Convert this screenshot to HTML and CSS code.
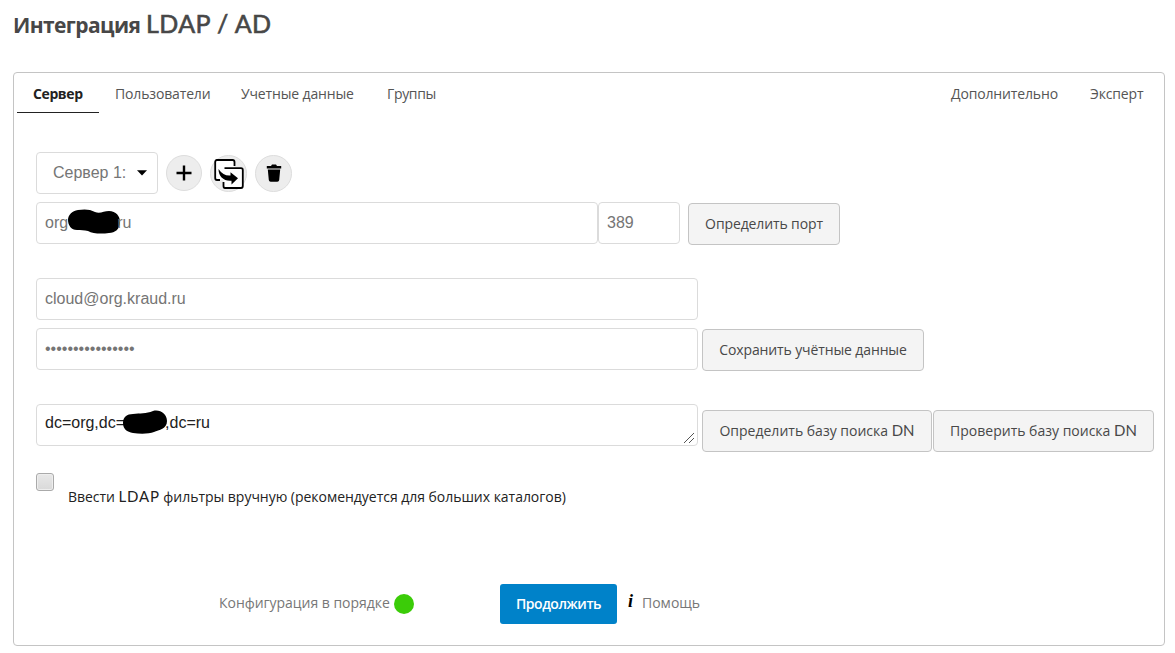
FILE: index.html
```html
<!DOCTYPE html>
<html lang="ru">
<head>
<meta charset="utf-8">
<title>Интеграция LDAP / AD</title>
<link rel="stylesheet" href="styles.css">
</head>
<body>
<h1 class="title">Интеграция <span class="title-latin">LDAP / AD</span></h1>
<main class="panel">
  <nav class="tabs">
    <a class="tab tab-active"><span class="w50">Сервер</span></a>
    <a class="tab"><span class="w95">Пользователи</span></a>
    <a class="tab"><span class="w114">Учетные данные</span></a>
    <a class="tab"><span class="w49">Группы</span></a>
    <a class="tab tab-right"><span class="w107">Дополнительно</span></a>
    <a class="tab"><span class="w54">Эксперт</span></a>
  </nav>
  <section class="form">
    <div class="row server-row">
      <div class="field select"><span>Сервер 1:</span><svg width="10" height="6" viewBox="0 0 10 6"><path d="M0 0.3H10L5 5.6Z"/></svg></div>
      <button class="round"><svg width="16" height="16" viewBox="0 0 16 16"><path d="M8 .5V15.5M.5 8H15.5" stroke="#000" stroke-width="2.4"/></svg></button>
      <button class="round round-copy"><svg width="30" height="30" viewBox="0 0 30 30"><rect x="1.5" y="1.5" width="19" height="19" rx="2" fill="#fff"/><rect x="9.5" y="9.5" width="19" height="19" rx="2" fill="#fff"/><path d="M6 21H3Q1.2 21 1.2 19V3Q1.2 1 3 1H18.5Q20.5 1 20.5 3V7M10.5 9.2H27Q28.8 9.2 28.8 11V27Q28.8 29 27 29H11Q9.5 29 9.5 27V23" fill="none" stroke="#000" stroke-width="1.8"/><path d="M4.5 10C8 15 12 17 16.5 16.5V13.2L24 19.3L17.5 25.5V21.8C9.5 22.5 4.5 17 4.5 10Z"/></svg></button>
      <button class="round round-delete"><svg width="16" height="18" viewBox="0 0 16 18"><path d="M.8 2H5L6 .5H10L11 2H15.2V4.5H.8ZM1.8 5.5H14.2L13.2 16Q13 17.8 11.3 17.8H4.7Q3 17.8 2.8 16Z"/></svg></button>
    </div>
    <div class="row host-row">
      <div class="field host"><span>org</span><svg class="blot" width="54" height="26" viewBox="0 0 54 26"><path d="M11 1C17 0 23 0 28 3C33 5 37 2 42 2C49 2 53 7 53 13C53 20 48 24 42 24C35 25 26 25 21 22C17 21 14 21 10 21C4 21 1 16 1 11C1 6 5 2 11 1Z"/></svg><span class="host-end">ru</span></div>
      <div class="field port">389</div>
      <button class="btn btn-port"><span>Определить порт</span></button>
    </div>
    <div class="row user-row"><div class="field wide">cloud@org.kraud.ru</div></div>
    <div class="row pass-row">
      <div class="field wide">••••••••••••••••</div>
      <button class="btn btn-save"><span>Сохранить учётные данные</span></button>
    </div>
    <div class="row base-row">
      <div class="field wide base"><span>dc=org,dc=</span><svg class="blot blot-base" width="46" height="24" viewBox="0 0 46 24"><path d="M11 4C18 3 24 4 31 1C38-1 45 4 45 11C45 19 37 20 32 22C27 24 18 24 11 23C5 22 1 19 1 13C1 7 5 4 11 4Z"/></svg><span class="base-end">,dc=ru</span><svg class="grip" width="12" height="12" viewBox="0 0 12 12"><path d="M1 11L11 1M6 11L11 6" stroke="#555"/></svg></div>
      <button class="btn btn-detect"><span>Определить базу поиска <b>DN</b></span></button>
      <button class="btn btn-check"><span>Проверить базу поиска <b>DN</b></span></button>
    </div>
    <div class="row filter-row">
      <span class="checkbox"></span>
      <span class="filter-label">Ввести <b class="ldap">LDAP</b> фильтры вручную (рекомендуется для больших каталогов)</span>
    </div>
  </section>
  <footer class="footer">
    <span class="status">Конфигурация в порядке</span><span class="status-dot"></span>
    <button class="continue">Продолжить</button>
    <span class="info">i</span><a class="help">Помощь</a>
  </footer>
</main>
</body>
</html>
```
FILE: styles.css
```css
* { box-sizing: border-box; }
body { margin: 0; height: 653px; padding: 7px 10px 0 13px; overflow: hidden; background: #fff; color: #333; font: 14px/20px "Open Sans", "Noto Sans", sans-serif; white-space: nowrap; }
button { margin: 0; padding: 0; font: inherit; }
b { font-family: Lato, sans-serif; font-weight: 400; font-size: 15px; line-height: 16px; }
svg { display: block; flex: none; }
.title { margin: 0; height: 65px; font-size: 21px; line-height: 33px; font-weight: 700; color: #474747; letter-spacing: -0.6px; }
.title-latin { margin-left: 1px; font-family: Lato, sans-serif; font-size: 25px; font-weight: 400; letter-spacing: 0.4px; -webkit-text-stroke: 0.6px #474747; }
.panel { width: 1152px; height: 574px; border: 1px solid #c4c4c4; border-radius: 4px; }
.tabs { display: flex; height: 40px; padding: 0 4px 0 3px; }
.tab { height: 40px; padding: 11px 16px 0; color: #555; letter-spacing: -0.15px; }
.tab span { display: block; }
.tab-active { color: #222; font-weight: 700; border-bottom: 1px solid #222; }
.tab-right { margin-left: auto; }
.w50 { width: 50px; letter-spacing: -0.4px; }
.w95 { width: 94px; }
.w114 { width: 114px; }
.w49 { width: 49px; letter-spacing: -0.35px; }
.w107 { width: 107px; }
.w54 { width: 54px; }
.form { padding: 39px 0 0 22px; }
.row { display: flex; align-items: flex-start; }
.field { display: flex; height: 42px; border: 1px solid #dbdbdb; border-radius: 4px; padding: 0 8px; background: #fff; color: #757575; font: 16px/40px "Liberation Sans", Arial, sans-serif; }
.server-row { height: 50px; }
.select { width: 122px; padding-left: 16px; padding-right: 10px; align-items: center; justify-content: space-between; margin-right: 8px; }
.round { display: flex; align-items: center; justify-content: center; width: 36px; height: 36px; margin: 3px 8px 0 0; border: 1px solid #ddd; border-radius: 50%; background: #ededed; color: #000; }
.round-copy { width: 37px; height: 37px; }
.round-delete { width: 37px; height: 37px; padding-bottom: 2px; }
.host-row { height: 76px; }
.host { width: 562px; }
.host .blot { margin: 6px 0 0 -1px; }
.host-end { margin-left: -4px; }
.port { width: 82px; }
.btn { height: 42px; margin-top: 1px; border: 1px solid #c4c4c4; border-radius: 4px; background: #f4f4f4; color: #484848; display: flex; align-items: center; justify-content: center; letter-spacing: -0.12px; }
.btn-port { width: 152px; margin-left: 8px; }
.user-row { height: 50px; }
.pass-row { height: 76px; }
.wide { width: 662px; }
.btn-save { width: 222px; margin-left: 4px; }
.base-row { height: 69px; }
.base { position: relative; color: #222; line-height: 36px; }
.blot-base { margin: 5px 0 0 -3px; }
.base-end { margin-left: -3px; }
.grip { position: absolute; right: 2px; bottom: 1px; }
.btn-detect, .btn-check { letter-spacing: 0; padding-bottom: 1px; }
.btn-detect { width: 230px; margin: 6px 0 0 4px; }
.btn-check { width: 221px; margin: 6px 0 0 1px; }
.checkbox { width: 18px; height: 18px; border: 1px solid #aaa; border-radius: 3px; background: linear-gradient(#e8e8e8, #d9d9d9); box-shadow: inset 0 0 0 1px #eee; }
.filter-row { height: 69px; }
.filter-label { margin: 14px 0 0 14px; color: #222; letter-spacing: -0.03px; }
.ldap { letter-spacing: 0.8px; }
.footer { display: flex; padding: 42px 0 0 205px; color: #777; }
.status { width: 171px; margin-top: 9px; letter-spacing: -0.03px; }
.status-dot { width: 20px; height: 20px; margin: 10px 0 0 4px; border-radius: 50%; background: #3bcc08; }
.continue { width: 117px; height: 40px; margin-left: 86px; border: 0; border-radius: 3px; background: #0082c9; color: #fff; font-weight: 600; letter-spacing: -0.45px; }
.info { width: 14px; margin: 6px 0 0 11px; color: #000; font: italic bold 18px/22px "Liberation Serif", serif; }
.help { margin-top: 9px; }
```
